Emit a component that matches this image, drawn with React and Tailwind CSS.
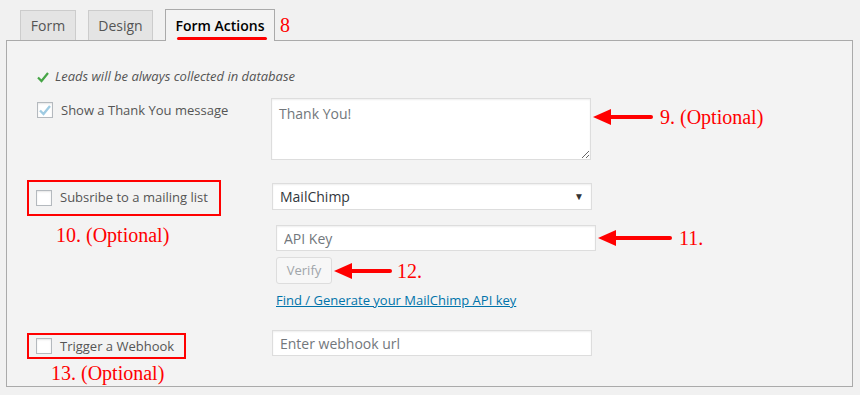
const FONT = { fontFamily: '"Open Sans", "Noto Sans", sans-serif' };

function Arrow({ width }) {
  return (
    <svg width={width} height="16" viewBox={`0 0 ${width} 16`} className="shrink-0">
      <polygon points="0,8 18,0 18,16" fill="#ff0000" />
      <rect x="16" y="6" width={width - 16} height="4" rx="2" fill="#ff0000" />
    </svg>
  );
}

function Note({ children, arrow, gap = 'ml-[7px]', pos = 'top-1/2' }) {
  return (
    <div className={`absolute left-full ${pos} -translate-y-1/2 flex items-center pl-[2px] whitespace-nowrap`}>
      <Arrow width={arrow} />
      <span className={`${gap} text-[20px] text-[#ff0000] leading-none font-['Liberation_Serif',serif]`}>
        {children}
      </span>
    </div>
  );
}

function Box({ checked }) {
  return (
    <span className="w-4 h-4 shrink-0 border border-[#b4b9be] bg-white shadow-[inset_0_1px_2px_rgba(0,0,0,0.1)] flex items-center justify-center">
      {checked && (
        <svg width="14" height="14" viewBox="0 0 14 14">
          <path d="M2 7.5 L5.5 11 L12 3" stroke="#9fcbe2" strokeWidth="2.4" fill="none" />
        </svg>
      )}
    </span>
  );
}

const inputCls =
  'w-[320px] bg-white border border-[#dddddd] shadow-[inset_0_1px_2px_rgba(0,0,0,0.07)] px-[7px] text-[14px] text-[#32373c] placeholder:text-[#72777c] outline-none';

export default function App() {
  return (
    <div className="w-[860px] h-[395px] bg-[#f1f1f1] pt-[9px] pl-[6px] overflow-hidden" style={FONT}>
      <div className="flex items-end pl-[14px] gap-[12px] h-[31px]">
        <div className="h-[30px] w-[56px] border border-b-0 border-[#cccccc] bg-[#e4e4e4] text-[14px] text-[#555] flex items-center justify-center">
          Form
        </div>
        <div className="h-[30px] w-[65px] border border-b-0 border-[#cccccc] bg-[#e4e4e4] text-[14px] text-[#555] flex items-center justify-center">
          Design
        </div>
        <div className="relative h-[32px] w-[110px] -mb-px border border-b-0 border-[#aaaaaa] bg-[#f3f3f3] text-[14px] font-semibold text-[#000] flex items-center justify-center z-10">
          Form Actions
          <span className="absolute left-[11px] right-[7px] bottom-[1px] h-[3px] rounded-full bg-[#ff0000]" />
          <span className="absolute left-[114px] top-[5px] text-[20px] font-normal text-[#ff0000] leading-none font-['Liberation_Serif',serif]">
            8
          </span>
        </div>
      </div>

      <div className="w-[847px] h-[347px] border border-[#aaaaaa] bg-[#f3f3f3] pl-[20px] pt-[26px]">
        <p className="h-[20px] flex items-center text-[13px] italic text-[#555] pl-[10px]">
          <svg width="12" height="12" viewBox="0 0 12 12" className="mr-[6px]">
            <path d="M1 6.5 L4.5 10 L11 2" stroke="#46a546" strokeWidth="2.2" fill="none" />
          </svg>
          Leads will be always collected in database
        </p>

        <div className="flex mt-[11px]">
          <label className="w-[244px] pt-[4px] pl-[10px] flex items-start gap-[8px] text-[13px] text-[#555]">
            <Box checked />
            <span className="leading-[16px]">Show a Thank You message</span>
          </label>
          <div className="relative">
            <textarea
              placeholder="Thank You!"
              className={`${inputCls} h-[62px] py-[4px] resize block`}
            />
            <Note arrow={60} pos="top-[19px]">9. (Optional)</Note>
          </div>
        </div>

        <div className="flex mt-[20px]">
          <div className="w-[244px]">
            <label className="w-[194px] h-[36px] border-2 border-[#ff0000] pl-[7px] flex items-center gap-[8px] text-[13px] text-[#555]">
              <Box />
              Subsribe to a mailing list
            </label>
            <p className="mt-[9px] pl-[29px] text-[20px] text-[#ff0000] leading-none font-['Liberation_Serif',serif]">
              10. (Optional)
            </p>
          </div>
          <div className="pt-[3px] pl-[1px]">
            <div className={`${inputCls} h-[27px] flex items-center justify-between pr-[7px]`}>
              <span className="text-[#32373c]">MailChimp</span>
              <span className="text-[10px] text-[#333]">▼</span>
            </div>
            <div className="ml-[4px]">
              <div className="relative mt-[15px] w-[320px]">
                <input placeholder="API Key" className={`${inputCls} h-[26px] block`} />
                <Note arrow={74}>11.</Note>
              </div>
              <div className="relative mt-[6px] w-[56px]">
                <button className="w-[56px] h-[27px] border border-[#dddddd] bg-[#f7f7f7] rounded-[3px] text-[13px] text-[#a0a5aa]">
                  Verify
                </button>
                <Note arrow={58} gap="ml-[5px]">12.</Note>
              </div>
              <a className="block mt-[7px] text-[13px] text-[#0073aa] underline leading-[18px]">
                Find / Generate your MailChimp API key
              </a>
            </div>
          </div>
        </div>

        <div className="flex mt-[21px]">
          <div className="w-[244px] pt-[3px]">
            <label className="w-[159px] h-[26px] border-2 border-[#ff0000] pl-[7px] flex items-center gap-[8px] text-[13px] text-[#555]">
              <Box />
              Trigger a Webhook
            </label>
            <p className="mt-[4px] pl-[24px] text-[20px] text-[#ff0000] leading-none font-['Liberation_Serif',serif]">
              13. (Optional)
            </p>
          </div>
          <div className="pl-[1px]">
            <input placeholder="Enter webhook url" className={`${inputCls} h-[26px] block`} />
          </div>
        </div>
      </div>
    </div>
  );
}
